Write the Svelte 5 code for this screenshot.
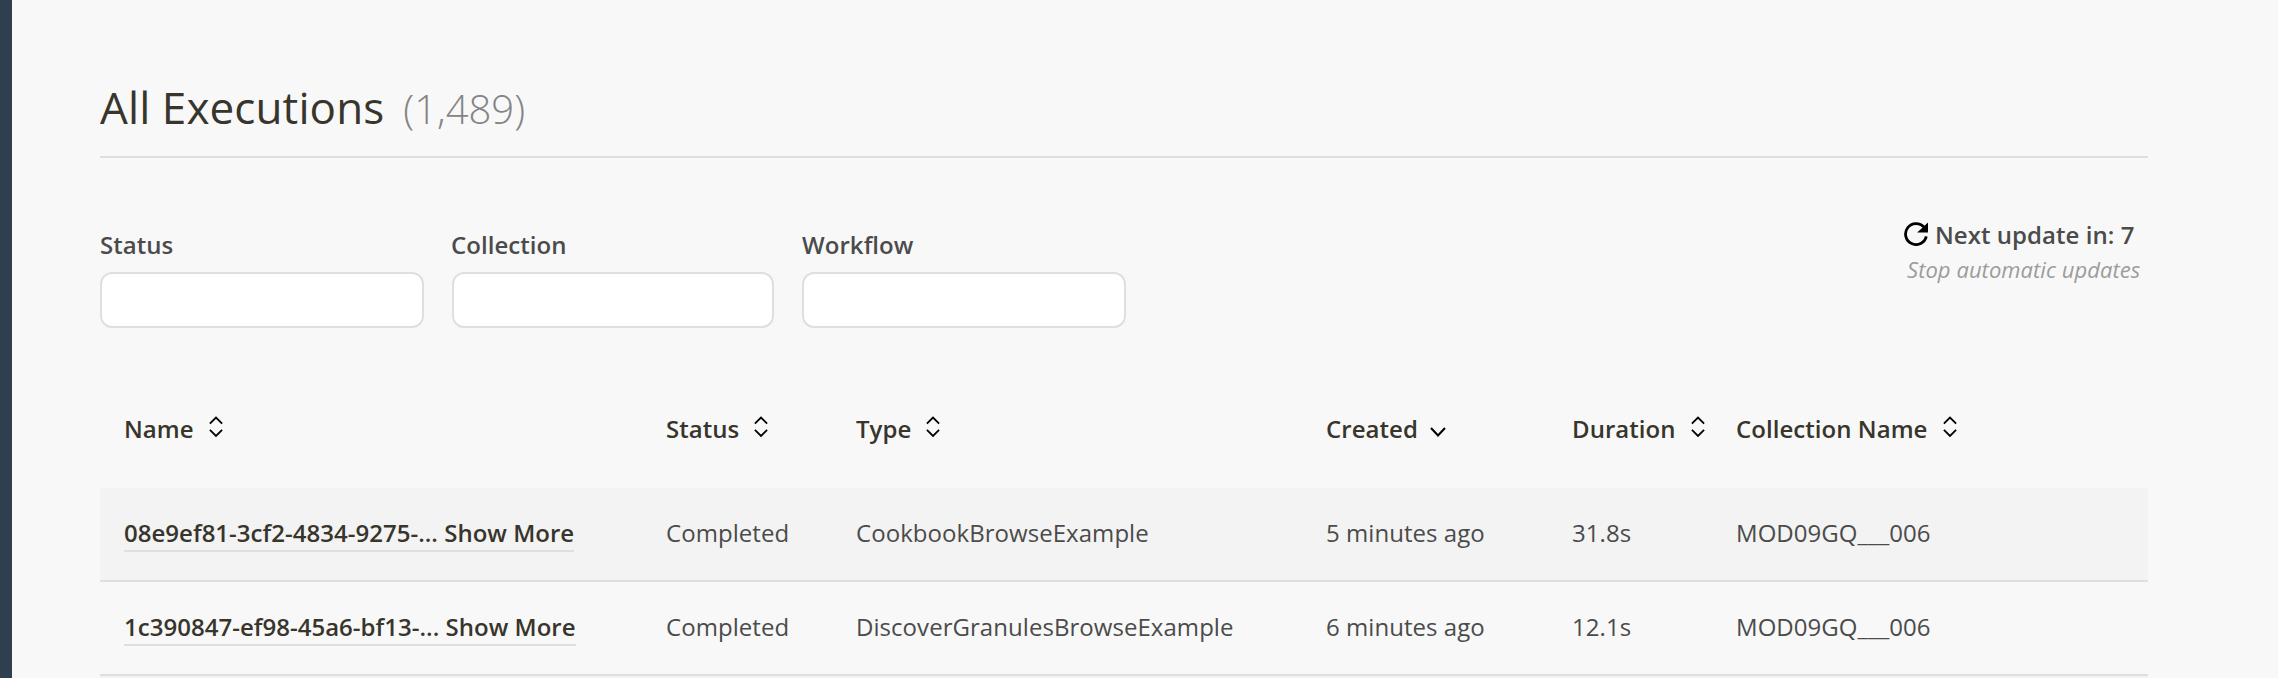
<script>
  const filters = ['Status', 'Collection', 'Workflow'];
  const columns = [
    { label: 'Name', sort: 'both' },
    { label: 'Status', sort: 'both' },
    { label: 'Type', sort: 'both' },
    { label: 'Created', sort: 'down' },
    { label: 'Duration', sort: 'both' },
    { label: 'Collection Name', sort: 'both' }
  ];
  const rows = [
    { name: '08e9ef81-3cf2-4834-9275-...', cells: ['Completed', 'CookbookBrowseExample', '5 minutes ago', '31.8s', 'MOD09GQ___006'] },
    { name: '1c390847-ef98-45a6-bf13-...', cells: ['Completed', 'DiscoverGranulesBrowseExample', '6 minutes ago', '12.1s', 'MOD09GQ___006'] }
  ];
</script>

<div class="page">
  <aside></aside>
  <main>
    <header>
      <h1>All Executions</h1>
      <span class="count">(1,489)</span>
    </header>

    <section class="controls">
      <div class="filters">
        {#each filters as label}
          <label>
            <span>{label}</span>
            <input type="text" />
          </label>
        {/each}
      </div>
      <div class="update">
        <div class="next">
          <svg width="24" height="24" viewBox="0 0 24 24">
            <path d="M20 5.2A10.5 10.5 0 1 0 22.3 14.4" fill="none" stroke="#000" stroke-width="2.8" />
            <path d="M24 0.5V10.5H13.2Z" fill="#000" />
          </svg>
          <span>Next update in: 7</span>
        </div>
        <div class="stop">Stop automatic updates</div>
      </div>
    </section>

    <section class="table">
      <div class="row head">
        {#each columns as col}
          <div class="cell">
            <span>{col.label}</span>
            {#if col.sort === 'both'}
              <svg class="both" width="14" height="22" viewBox="0 0 14 22">
                <path d="M0.9 7.6L7 1.5L13.1 7.6M0.9 13.9L7 20L13.1 13.9" />
              </svg>
            {:else}
              <svg class="down" width="16" height="10" viewBox="0 0 16 10">
                <path d="M1 1L8 8.4L15 1" />
              </svg>
            {/if}
          </div>
        {/each}
      </div>
      {#each rows as row}
        <div class="row body">
          <div class="cell"><a href="#top">{row.name} Show More</a></div>
          {#each row.cells as text}
            <div class="cell">{text}</div>
          {/each}
        </div>
      {/each}
      <div class="row body"></div>
    </section>
  </main>
</div>

<style>
  :global(body) {
    background: #f8f8f8;
    overflow: hidden;
  }
  .page {
    display: flex;
    height: 678px;
    overflow: hidden;
    font-family: 'Open Sans', 'Noto Sans', sans-serif;
    font-size: 24px;
    letter-spacing: 0.05px;
    color: #4b4b4b;
    background: #f8f8f8;
  }
  aside {
    flex: none;
    width: 12px;
    background: #2f3f50;
  }
  main {
    width: 2048px;
    margin-left: 88px;
  }
  header {
    display: flex;
    align-items: baseline;
    gap: 19px;
    box-sizing: border-box;
    height: 158px;
    padding-top: 75px;
    border-bottom: 2px solid #dfdfdf;
    line-height: 64px;
    white-space: nowrap;
  }
  h1 {
    margin: 0;
    font-size: 44px;
    font-weight: 400;
    letter-spacing: 0.1px;
    color: #37352c;
  }
  .count {
    font-size: 40px;
    font-weight: 300;
    letter-spacing: 0;
    color: #848484;
  }
  .controls {
    display: flex;
    justify-content: space-between;
    height: 250px;
  }
  .filters {
    display: flex;
    gap: 28px;
    padding-top: 71px;
  }
  label {
    display: flex;
    flex-direction: column;
    width: 324px;
    font-weight: 600;
  }
  label:nth-child(2) {
    width: 322px;
  }
  label:nth-child(2) span {
    margin-left: -1px;
  }
  label span {
    line-height: 32px;
    height: 43px;
  }
  input {
    box-sizing: border-box;
    width: 100%;
    height: 56px;
    margin: 0;
    background: #fff;
    border: 2px solid #dfdfdf;
    border-radius: 12px;
  }
  .update {
    padding-top: 59px;
    width: 244px;
    white-space: nowrap;
  }
  .next {
    display: flex;
    align-items: center;
    gap: 7px;
    height: 34px;
    font-weight: 600;
  }
  .stop {
    padding-left: 3px;
    font-size: 22px;
    font-style: italic;
    line-height: 36px;
    color: #9c9c9c;
  }
  .row {
    display: grid;
    grid-template-columns: 542px 190px 470px 246px 164px 1fr;
    padding-left: 24px;
    white-space: nowrap;
  }
  .head {
    height: 80px;
    font-weight: 600;
    color: #37352c;
  }
  .head .cell {
    display: flex;
    align-items: flex-start;
    line-height: 41px;
  }
  svg {
    flex: none;
  }
  .head path {
    fill: none;
    stroke: #000;
    stroke-width: 1.8;
  }
  .head .down path {
    stroke-width: 2.1;
  }
  .both {
    margin: 8px 0 0 15px;
  }
  .down {
    margin: 19px 0 0 12px;
  }
  .body {
    box-sizing: border-box;
    height: 94px;
    border-bottom: 2px solid #dfdfdf;
    line-height: 89px;
  }
  .body:nth-child(even) {
    background: #f3f3f3;
  }
  .body a {
    display: inline-block;
    padding-bottom: 1px;
    border-bottom: 2px solid #dfdfdf;
    font-weight: 600;
    letter-spacing: 0.02px;
    line-height: 33px;
    color: #37352c;
    text-decoration: none;
  }
</style>
